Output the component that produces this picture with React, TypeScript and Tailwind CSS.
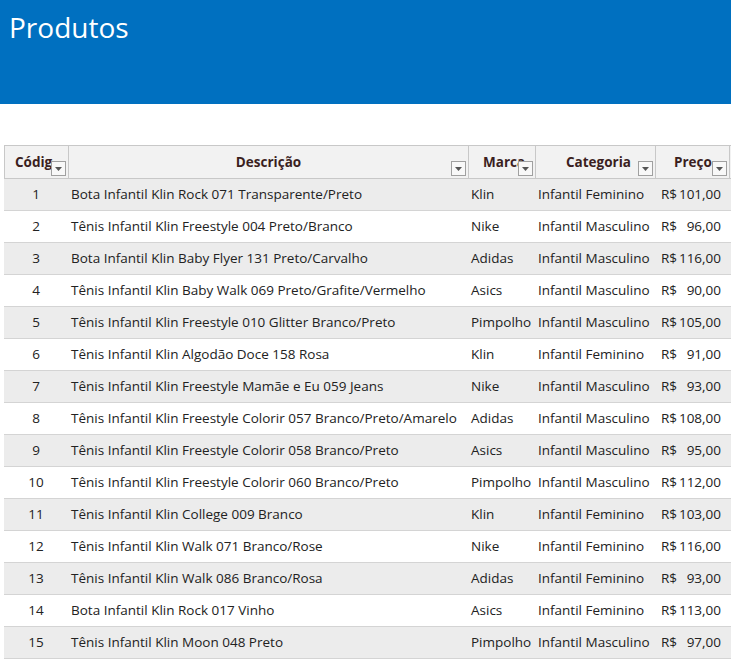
import React from "react";

const rows: [number, string, string, string, string][] = [
  [1, "Bota Infantil Klin Rock 071 Transparente/Preto", "Klin", "Infantil Feminino", "101,00"],
  [2, "Tênis Infantil Klin Freestyle 004 Preto/Branco", "Nike", "Infantil Masculino", "96,00"],
  [3, "Bota Infantil Klin Baby Flyer 131 Preto/Carvalho", "Adidas", "Infantil Masculino", "116,00"],
  [4, "Tênis Infantil Klin Baby Walk 069 Preto/Grafite/Vermelho", "Asics", "Infantil Masculino", "90,00"],
  [5, "Tênis Infantil Klin Freestyle 010 Glitter Branco/Preto", "Pimpolho", "Infantil Masculino", "105,00"],
  [6, "Tênis Infantil Klin Algodão Doce 158 Rosa", "Klin", "Infantil Feminino", "91,00"],
  [7, "Tênis Infantil Klin Freestyle Mamãe e Eu 059 Jeans", "Nike", "Infantil Masculino", "93,00"],
  [8, "Tênis Infantil Klin Freestyle Colorir 057 Branco/Preto/Amarelo", "Adidas", "Infantil Masculino", "108,00"],
  [9, "Tênis Infantil Klin Freestyle Colorir 058 Branco/Preto", "Asics", "Infantil Masculino", "95,00"],
  [10, "Tênis Infantil Klin Freestyle Colorir 060 Branco/Preto", "Pimpolho", "Infantil Masculino", "112,00"],
  [11, "Tênis Infantil Klin College 009 Branco", "Klin", "Infantil Feminino", "103,00"],
  [12, "Tênis Infantil Klin Walk 071 Branco/Rose", "Nike", "Infantil Feminino", "116,00"],
  [13, "Tênis Infantil Klin Walk 086 Branco/Rosa", "Adidas", "Infantil Feminino", "93,00"],
  [14, "Bota Infantil Klin Rock 017 Vinho", "Asics", "Infantil Feminino", "113,00"],
  [15, "Tênis Infantil Klin Moon 048 Preto", "Pimpolho", "Infantil Masculino", "97,00"],
];

const cols = "grid-cols-[64px_400px_67px_120px_74px]";

function Filter() {
  return (
    <span className="absolute right-[2px] bottom-[2px] w-[15px] h-[15px] border border-[#a0a0a0] bg-[#f8f8f8] flex items-center justify-center">
      <svg width="7" height="4" viewBox="0 0 7 4"><path d="M0 0h7L3.5 4z" fill="#555" /></svg>
    </span>
  );
}

function H({ label, justify = "justify-center", pr = "" }: { label: string; justify?: string; pr?: string }) {
  return (
    <div className={`relative flex items-center ${justify} ${pr} h-[32px] border-r border-[#c8c8c8] overflow-hidden whitespace-nowrap font-bold text-[#3b1f1f]`}>
      <span>{label}</span>
      <Filter />
    </div>
  );
}

export default function App() {
  return (
    <div className="w-[731px] h-[659px] bg-white overflow-hidden text-[13.5px] text-[#222]" style={{ fontFamily: "'Open Sans', 'Liberation Sans', sans-serif" }}>
      <div className="h-[104px] bg-[#0070c0] px-[9px] pt-[7px] text-white text-[28px] leading-[40px]">Produtos</div>
      <div className="mt-[41px] ml-[4px] w-[727px]">
        <div className={`grid ${cols} bg-[#f2f2f2] border-t border-l border-b border-[#c8c8c8]`}>
          <H label="Códig" justify="justify-start" pr="pl-[10px]" />
          <H label="Descrição" />
          <H label="Marca" justify="justify-start" pr="pl-[14px]" />
          <H label="Categoria" justify="justify-start" pr="pl-[30px]" />
          <H label="Preço" justify="justify-start" pr="pl-[18px]" />
        </div>
        {rows.map((r, i) => (
          <div key={r[0]} className={`grid ${cols} h-[32px] items-center border-b border-[#d4d4d4] whitespace-nowrap ${i % 2 === 0 ? "bg-[#ececec]" : "bg-white"}`}>
            <div className="text-center">{r[0]}</div>
            <div className="pl-[3px] overflow-hidden">{r[1]}</div>
            <div className="pl-[3px] overflow-hidden">{r[2]}</div>
            <div className="pl-[3px] overflow-hidden">{r[3]}</div>
            <div className="flex justify-between pl-[6px] pr-[8px]"><span>R$</span><span>{r[4]}</span></div>
          </div>
        ))}
      </div>
    </div>
  );
}
